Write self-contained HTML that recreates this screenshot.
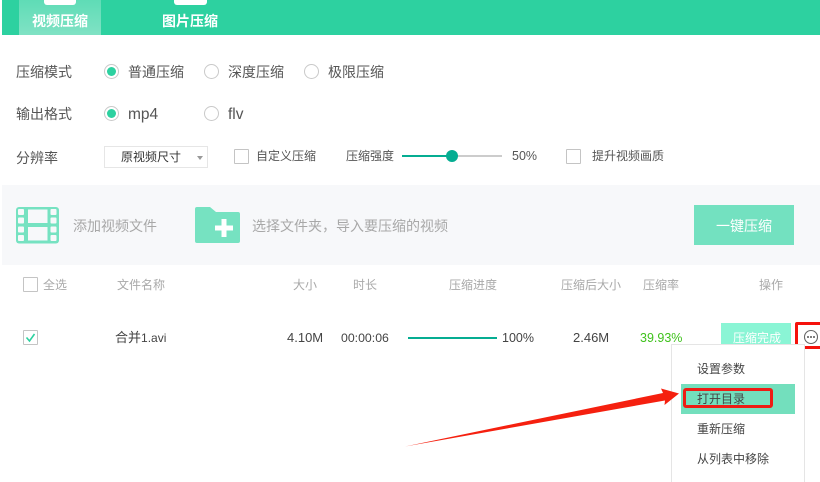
<!DOCTYPE html>
<html lang="zh">
<head>
<meta charset="utf-8">
<style>
html,body{margin:0;padding:0;background:#fff}
#p{position:relative;width:820px;height:482px;overflow:hidden;background:#fff;font-family:"Liberation Sans","Noto Sans CJK SC",sans-serif}
#p>div,#p>svg{position:absolute}
.t{white-space:nowrap;line-height:20px;height:20px}
.s14{font-size:14px;color:#555}
.s12{font-size:12px;color:#555}
.g12{font-size:12px;color:#a9a9a9}
.g13{font-size:12.5px;color:#444}
.r{width:15px;height:15px;border-radius:50%;border:1px solid #c9c9c9;box-sizing:border-box;background:#fff}
.r.on:after{content:"";position:absolute;left:2px;top:2px;width:9px;height:9px;border-radius:50%;background:#2dd1a0}
.c{width:15px;height:15px;border:1px solid #c4c4c4;border-radius:1px;box-sizing:border-box;background:#fff}
</style>
</head>
<body>
<div id="p">
<div style="left:2px;top:0;width:818px;height:35px;background:#2dd1a0"></div>
<div style="left:19px;top:0;width:82px;height:35px;background:linear-gradient(#5fdcb6,#80e2c4)"></div>
<div style="left:44px;top:0;width:32px;height:5px;background:#fff;border-radius:0 0 3px 3px"></div>
<div style="left:174px;top:0;width:33px;height:5px;background:#fff;border-radius:0 0 3px 3px"></div>
<div class="t" style="left:32px;top:11px;font-size:14px;font-weight:700;color:#fff">视频压缩</div>
<div class="t" style="left:162px;top:11px;font-size:14px;font-weight:700;color:#fff">图片压缩</div>

<div class="t s14" style="left:16px;top:62px">压缩模式</div>
<div class="r on" style="left:104px;top:64px"></div>
<div class="t s14" style="left:128px;top:62px">普通压缩</div>
<div class="r" style="left:204px;top:64px"></div>
<div class="t s14" style="left:228px;top:62px">深度压缩</div>
<div class="r" style="left:304px;top:64px"></div>
<div class="t s14" style="left:328px;top:62px">极限压缩</div>

<div class="t s14" style="left:16px;top:104px">输出格式</div>
<div class="r on" style="left:104px;top:106px"></div>
<div class="t s14" style="left:128px;top:105px;font-size:15.500px">mp4</div>
<div class="r" style="left:204px;top:106px"></div>
<div class="t s14" style="left:228px;top:105px;font-size:15.500px">flv</div>

<div class="t s14" style="left:16px;top:148px;font-size:14px">分辨率</div>
<div style="left:104px;top:146px;width:104px;height:22px;border:1px solid #e6e6e6;box-sizing:border-box;background:#fff"></div>
<div class="t s12" style="left:121px;top:147px;color:#333">原视频尺寸</div>
<div style="left:197px;top:156px;width:0;height:0;border-left:3px solid transparent;border-right:3px solid transparent;border-top:4px solid #999"></div>
<div class="c" style="left:234px;top:149px"></div>
<div class="t s12" style="left:256px;top:146px">自定义压缩</div>
<div class="t s12" style="left:346px;top:146px">压缩强度</div>
<div style="left:402px;top:155px;width:100px;height:2px;background:#ccc"></div>
<div style="left:402px;top:155px;width:50px;height:2px;background:#05ad92"></div>
<div style="left:446px;top:150px;width:12px;height:12px;border-radius:50%;background:#05ad92"></div>
<div class="t s12" style="left:512px;top:146px;font-size:12.500px">50%</div>
<div class="c" style="left:566px;top:149px"></div>
<div class="t s12" style="left:592px;top:146px">提升视频画质</div>

<div style="left:2px;top:185px;width:818px;height:80px;background:#f7f8fa"></div>
<svg style="left:16px;top:207px" width="43" height="37" viewBox="0 0 43 37">
<rect width="43" height="36.500" rx="3" fill="#76e2c1"/>
<rect x="12" y="2.500" width="19.500" height="13.500" fill="#f7f8fa"/>
<rect x="12" y="20" width="19.500" height="13.500" fill="#f7f8fa"/>
<g fill="#f7f8fa">
<rect x="2" y="2" width="6" height="6" rx="1"/><rect x="2" y="10.500" width="6" height="6" rx="1"/><rect x="2" y="19.500" width="6" height="6" rx="1"/><rect x="2" y="28" width="6" height="6" rx="1"/>
<rect x="34.500" y="2" width="6" height="6" rx="1"/><rect x="34.500" y="10.500" width="6" height="6" rx="1"/><rect x="34.500" y="19.500" width="6" height="6" rx="1"/><rect x="34.500" y="28" width="6" height="6" rx="1"/>
</g>
</svg>
<div class="t" style="left:73px;top:216px;font-size:14px;color:#a8a8a8">添加视频文件</div>
<svg style="left:195px;top:207px" width="46" height="37" viewBox="0 0 46 37">
<path d="M2 0H15L21 5H43a2 2 0 0 1 2 2V34a2 2 0 0 1-2 2H2a2 2 0 0 1-2-2V2a2 2 0 0 1 2-2Z" fill="#76e2c1"/>
<rect x="26.500" y="12" width="5" height="18" fill="#fff"/>
<rect x="20" y="18.500" width="18" height="5" fill="#fff"/>
</svg>
<div class="t" style="left:252px;top:216px;font-size:14px;color:#a8a8a8">选择文件夹，导入要压缩的视频</div>
<div style="left:694px;top:205px;width:100px;height:40px;background:#73e1c0"></div>
<div class="t" style="left:716px;top:216px;font-size:14px;color:#fff">一键压缩</div>

<div class="c" style="left:23px;top:277px"></div>
<div class="t g12" style="left:43px;top:275px">全选</div>
<div class="t g12" style="left:117px;top:275px">文件名称</div>
<div class="t g12" style="left:293px;top:275px">大小</div>
<div class="t g12" style="left:353px;top:275px">时长</div>
<div class="t g12" style="left:449px;top:275px">压缩进度</div>
<div class="t g12" style="left:561px;top:275px">压缩后大小</div>
<div class="t g12" style="left:643px;top:275px">压缩率</div>
<div class="t g12" style="left:759px;top:275px">操作</div>

<div class="c" style="left:23px;top:330px"></div>
<svg style="left:23px;top:330px" width="15" height="15" viewBox="0 0 15 15"><path d="M3.500 7.500 6.500 11 11.500 4" fill="none" stroke="#2dd1a0" stroke-width="1.600"/></svg>
<div class="t g13" style="left:115px;top:328px;font-size:13px">合并<span style="font-size:12px">1.avi</span></div>
<div class="t g13" style="left:287px;top:328px;font-size:13px">4.10M</div>
<div class="t g13" style="left:341px;top:328px;font-size:12.300px">00:00:06</div>
<div style="left:408px;top:337px;width:89px;height:2px;background:#05ad92"></div>
<div class="t g13" style="left:502px;top:328px">100%</div>
<div class="t g13" style="left:573px;top:328px;font-size:13px">2.46M</div>
<div class="t" style="left:640px;top:328px;font-size:12.500px;color:#3fc21c">39.93%</div>
<div style="left:721px;top:323px;width:70px;height:24px;background:#8af5d5"></div>
<div class="t" style="left:733px;top:328px;font-size:12px;color:#fff">压缩完成</div>
<svg style="left:803px;top:329px" width="16" height="16" viewBox="0 0 16 16">
<circle cx="8" cy="8" r="6.500" fill="#fff" stroke="#666" stroke-width="1.100"/>
<circle cx="5" cy="8" r="1" fill="#555"/><circle cx="8" cy="8" r="1" fill="#555"/><circle cx="11" cy="8" r="1" fill="#555"/>
</svg>
<div style="left:795px;top:322px;width:32px;height:27px;border:3px solid #f5120c;border-radius:2px;box-sizing:border-box"></div>

<div style="left:671px;top:344px;width:134px;height:150px;border:1px solid #e5e5e5;box-sizing:border-box;background:#fff"></div>
<div class="t s12" style="left:697px;top:359px;color:#444">设置参数</div>
<div style="left:681px;top:384px;width:114px;height:30px;background:#73dfbd"></div>
<div style="left:683px;top:388px;width:90px;height:20px;border:3px solid #ee1c14;border-radius:3px;box-sizing:border-box"></div>
<div class="t s12" style="left:697px;top:389px;color:#444">打开目录</div>
<div class="t s12" style="left:697px;top:419px;color:#444">重新压缩</div>
<div class="t s12" style="left:697px;top:449px;color:#444">从列表中移除</div>

<svg style="left:0;top:0" width="820" height="482" viewBox="0 0 820 482">
<path d="M405 446.500 663 393 661 388.500 679 393.500 664.500 405 665 400.500Z" fill="#f5200f"/>
</svg>
</div>
</body>
</html>
